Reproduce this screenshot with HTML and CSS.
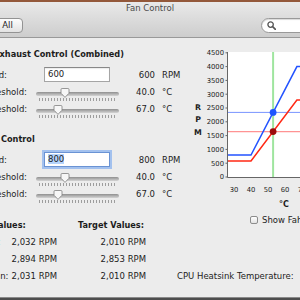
FILE: index.html
```html
<!DOCTYPE html>
<html lang="en">
  <head>
    <meta charset="UTF-8">
    <title>Fan Control</title>
    <link rel="stylesheet" href="styles.css">
  </head>
  <body>
    <div class="window">
      <header class="titlebar">
        <div class="title">Fan Control</div>
        <div class="toolbar">
          <button class="push-button">All</button>
          <div class="search-field">
            <svg width="9" height="9" viewBox="0 0 9 9"><circle cx="3.6" cy="3.6" r="2.7" fill="none" stroke="#555" stroke-width="1.3"/><line x1="5.6" y1="5.6" x2="8.4" y2="8.4" stroke="#555" stroke-width="1.6" stroke-linecap="round"/></svg>
          </div>
        </div>
      </header>

      <main class="content">
        <section class="controls">
          <h2 class="group-title exhaust">Exhaust Control (Combined)</h2>
          <div class="control-grid">
            <label>Base Speed:</label>
            <div><div class="field">600</div></div>
            <span class="num">600</span><span class="unit">RPM</span>

            <label>Lower Threshold:</label>
            <div class="slider">
              <div class="slider-track"></div>
              <div class="slider-ticks"></div>
              <svg class="slider-thumb" style="left: 24px" width="10" height="10" viewBox="0 0 10 10"><path d="M1 1.6Q1 .5 2.1 .5H7.9Q9 .5 9 1.6V5.2L5 9.4L1 5.2Z" fill="#f7f7f7" stroke="#7d7d7d" stroke-width=".8"/></svg>
            </div>
            <span class="num">40.0</span><span class="unit">°C</span>

            <label>Upper Threshold:</label>
            <div class="slider">
              <div class="slider-track"></div>
              <div class="slider-ticks"></div>
              <svg class="slider-thumb" style="left: 17px" width="10" height="10" viewBox="0 0 10 10"><path d="M1 1.6Q1 .5 2.1 .5H7.9Q9 .5 9 1.6V5.2L5 9.4L1 5.2Z" fill="#f7f7f7" stroke="#7d7d7d" stroke-width=".8"/></svg>
            </div>
            <span class="num">67.0</span><span class="unit">°C</span>
          </div>

          <h2 class="group-title intake">Intake Control</h2>
          <div class="control-grid">
            <label>Base Speed:</label>
            <div><div class="field focused"><span class="selection">800</span></div></div>
            <span class="num">800</span><span class="unit">RPM</span>

            <label>Lower Threshold:</label>
            <div class="slider">
              <div class="slider-track"></div>
              <div class="slider-ticks"></div>
              <svg class="slider-thumb" style="left: 24px" width="10" height="10" viewBox="0 0 10 10"><path d="M1 1.6Q1 .5 2.1 .5H7.9Q9 .5 9 1.6V5.2L5 9.4L1 5.2Z" fill="#f7f7f7" stroke="#7d7d7d" stroke-width=".8"/></svg>
            </div>
            <span class="num">40.0</span><span class="unit">°C</span>

            <label>Upper Threshold:</label>
            <div class="slider">
              <div class="slider-track"></div>
              <div class="slider-ticks"></div>
              <svg class="slider-thumb" style="left: 17px" width="10" height="10" viewBox="0 0 10 10"><path d="M1 1.6Q1 .5 2.1 .5H7.9Q9 .5 9 1.6V5.2L5 9.4L1 5.2Z" fill="#f7f7f7" stroke="#7d7d7d" stroke-width=".8"/></svg>
            </div>
            <span class="num">67.0</span><span class="unit">°C</span>
          </div>
        </section>

        <div class="chart">
          <svg width="120" height="155" viewBox="0 0 120 155">
            <rect x="38" y="7" width="90" height="125" fill="#fff"/>
            <g class="axis-labels" text-anchor="end">
              <text x="34" y="10.2">4500</text>
              <text x="34" y="24">4000</text>
              <text x="34" y="37.8">3500</text>
              <text x="34" y="51.6">3000</text>
              <text x="34" y="65.4">2500</text>
              <text x="34" y="79.2">2000</text>
              <text x="34" y="93">1500</text>
              <text x="34" y="106.8">1000</text>
              <text x="34" y="120.6">500</text>
              <text x="34" y="134.4">0</text>
            </g>
            <g stroke="#666" stroke-width="1">
              <path d="M35.5 7.8H38M35.5 21.6H38M35.5 35.4H38M35.5 49.2H38M35.5 63H38M35.5 76.8H38M35.5 90.6H38M35.5 104.4H38M35.5 118.2H38M35.5 132H38"/>
              <path d="M37.5 7V132.5H125" fill="none"/>
            </g>
            <g class="axis-labels" text-anchor="middle">
              <text x="44" y="147">30</text>
              <text x="61" y="147">40</text>
              <text x="78" y="147">50</text>
              <text x="95" y="147">60</text>
              <text x="112" y="147">70</text>
            </g>
            <g class="axis-name" text-anchor="middle">
              <text x="8" y="65">R</text>
              <text x="8" y="77">P</text>
              <text x="8" y="90">M</text>
            </g>
            <line x1="38" y1="67.4" x2="125" y2="67.4" stroke="#7894ff" stroke-width="1"/>
            <line x1="38" y1="86.6" x2="125" y2="86.6" stroke="#ff9393" stroke-width="1.2"/>
            <line x1="83.1" y1="7" x2="83.1" y2="132" stroke="#9fe59f" stroke-width="2"/>
            <path d="M38 110H61L106.9 21.6H125" fill="none" stroke="#2353ff" stroke-width="1.5"/>
            <path d="M38 116H61L106.9 55H125" fill="none" stroke="#ff2814" stroke-width="1.5"/>
            <circle cx="83.1" cy="67.4" r="3.4" fill="#1e55ff"/>
            <circle cx="83.1" cy="86.6" r="3.4" fill="#9c0b0b"/>
          </svg>
        </div>

        <section class="values">
          <div class="values-grid">
            <span class="values-heading">Current Values:</span>
            <span class="target-heading">Target Values:</span>
            <span></span>

            <span>Intake Fan:</span><span class="num">2,032 RPM</span><span class="num">2,010 RPM</span><span></span>
            <span>CPU Fan:</span><span class="num">2,894 RPM</span><span class="num">2,853 RPM</span><span></span>
            <span>Exhaust Fan:</span><span class="num">2,031 RPM</span><span class="num">2,010 RPM</span><span class="temp">CPU Heatsink Temperature:</span>
          </div>
        </section>

        <div class="chart-footer">
          <div class="axis-title">°C</div>
          <label class="checkbox-row"><span class="checkbox"></span>Show Fahrenheit</label>
        </div>
      </main>

      <div class="window-bottom"></div>
    </div>
  </body>
</html>
```

FILE: styles.css
```css
* {
  box-sizing: border-box;
}

body {
  margin: 0;
  font-family: "DejaVu Sans", sans-serif;
  font-size: 8.5px;
  color: #1c1c1c;
  background: #ececec;
}

.window {
  width: 300px;
  height: 300px;
  overflow: hidden;
  display: flex;
  flex-direction: column;
  background: #ececec;
}

/* title bar + toolbar */
.titlebar {
  flex: none;
  height: 38px;
  border-top: 2px solid #93583a;
  border-bottom: 1px solid #999;
  background: linear-gradient(#e9e9e9, #cdcdcd);
}
.title {
  height: 12px;
  line-height: 12px;
  text-align: center;
  color: #4b4b4b;
}
.toolbar {
  display: flex;
  justify-content: space-between;
  align-items: center;
  height: 15px;
  margin-top: 4px;
}
.push-button {
  margin-left: -8px;
  width: 31px;
  height: 15px;
  padding: 0;
  font: inherit;
  line-height: 13px;
  color: #222;
  border: 1px solid #939393;
  border-radius: 4px;
  background: linear-gradient(#fdfdfd, #e2e2e2);
}
.search-field {
  width: 52px;
  height: 15px;
  margin-right: -13px;
  padding-left: 5px;
  display: flex;
  align-items: center;
  border: 1px solid #999;
  border-radius: 8px;
  background: #fff;
  box-shadow: inset 0 1px 1px rgba(0, 0, 0, .15);
}

/* main area */
.content {
  flex: 1;
  display: grid;
  grid-template-columns: 236px minmax(0, 1fr);
  grid-template-rows: 162px auto;
  margin-left: -46px;
}

.controls {
  grid-column: 1;
  grid-row: 1;
  padding-top: 9px;
}
.group-title {
  margin: 0;
  font-size: 8.2px;
  font-weight: bold;
  line-height: 14px;
  white-space: nowrap;
}
.group-title.exhaust {
  padding-left: 40px;
}
.group-title.intake {
  padding-left: 15px;
  margin-top: 15px;
}
.control-grid {
  display: grid;
  grid-template-columns: 82px 83px 36px 35px;
  grid-auto-rows: 17px;
  align-items: center;
  margin-top: 5px;
  white-space: nowrap;
}
.num {
  text-align: right;
}
.unit {
  padding-left: 7px;
}

.field {
  margin-left: 8px;
  width: 66px;
  height: 15px;
  padding-left: 3px;
  line-height: 13px;
  background: #fff;
  border: 1px solid #a5a5a5;
  border-top-color: #888;
  box-shadow: inset 0 1px 1px rgba(0, 0, 0, .08);
}
.field.focused {
  border-color: #6a93d4;
  box-shadow: 0 0 0 2px #a3c1ee;
}
.selection {
  background: #b4d3fb;
}

.slider {
  position: relative;
  height: 17px;
  padding-top: 9px;
}
.slider-track {
  height: 4px;
  border-radius: 2px;
  background: linear-gradient(#8f8f8f, #d4d4d4);
}
.slider-ticks {
  height: 3px;
  margin: 2px 3px 0 3px;
  background: repeating-linear-gradient(90deg, #9d9d9d 0 1px, transparent 1px 3px);
}
.slider-thumb {
  position: absolute;
  top: 5px;
}

/* chart */
.chart {
  grid-column: 2;
  grid-row: 1;
  padding-top: 7px;
}
.chart svg {
  display: block;
}
.axis-labels {
  font-size: 6.8px;
  fill: #222;
}
.axis-name {
  font-size: 7.8px;
  font-weight: bold;
  fill: #222;
}
.chart-footer {
  grid-column: 2;
  grid-row: 2;
}
.axis-title {
  margin-left: 89px;
  font-weight: bold;
  font-size: 8px;
  line-height: 9px;
}
.checkbox-row {
  display: flex;
  align-items: center;
  gap: 4px;
  margin: 6px 0 0 60px;
  white-space: nowrap;
}
.checkbox {
  flex: none;
  width: 8px;
  height: 8px;
  border: 1px solid #8c8c8c;
  border-radius: 2px;
  background: linear-gradient(#fff, #e2e2e2);
}

/* readings */
.values {
  grid-column: 1;
  grid-row: 2;
  padding-top: 16px;
}
.values-grid {
  display: grid;
  grid-template-columns: 54px 49px 89px max-content;
  grid-auto-rows: 17px;
  align-items: center;
  width: max-content;
  white-space: nowrap;
}
.values-heading {
  grid-column: span 2;
  font-weight: bold;
  font-size: 8.2px;
}
.target-heading {
  padding-left: 21px;
  font-weight: bold;
  font-size: 8.2px;
}
.temp {
  padding-left: 31px;
}

.window-bottom {
  flex: none;
  height: 3px;
  background: #4d4d4d;
  border-top: 1px solid #8a8a8a;
}
```
